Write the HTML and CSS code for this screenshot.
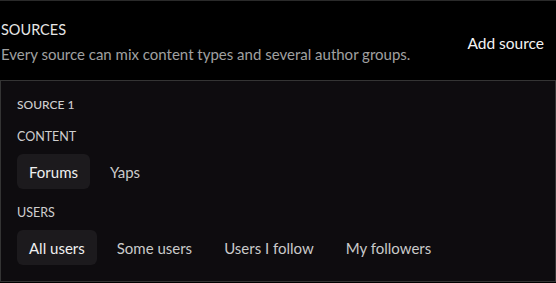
FILE: index.html
```html
<!DOCTYPE html>
<html lang="en">
<head>
  <meta charset="UTF-8">
  <title>Sources</title>
  <link rel="stylesheet" href="styles.css">
</head>
<body>

<div class="sources">
  <div class="sources-head">
    <div>
      <h2>SOURCES</h2>
      <p>Every source can mix content types and several author groups.</p>
    </div>
    <button class="add-btn">Add source</button>
  </div>

  <div class="source-card">
    <div class="card-title">SOURCE 1</div>

    <div class="group">
      <div class="group-label">CONTENT</div>
      <div class="pills">
        <button class="pill active">Forums</button>
        <button class="pill">Yaps</button>
      </div>
    </div>

    <div class="group">
      <div class="group-label">USERS</div>
      <div class="pills">
        <button class="pill active">All users</button>
        <button class="pill">Some users</button>
        <button class="pill">Users I follow</button>
        <button class="pill">My followers</button>
      </div>
    </div>
  </div>
</div>

</body>
</html>
```

FILE: styles.css
```css
body {
  margin: 0;
  background: #000;
  font-family: 'Lato', sans-serif;
  color: #ddd;
}
.sources {
  border-top: 1px solid #2a2a2a;
}
.sources-head {
  display: flex;
  align-items: center;
  justify-content: space-between;
  padding: 19px 12px 16px 1px;
}
.sources-head h2 {
  margin: 0;
  font-size: 14.5px;
  font-weight: 400;
  line-height: 20px;
  color: #e6e6e6;
}
.sources-head p {
  margin: 4px 0 0;
  font-size: 15px;
  line-height: 20px;
  color: #a0a0a0;
}
.add-btn {
  background: none;
  border: none;
  padding: 0;
  margin-top: 2px;
  font-family: inherit;
  font-size: 15.5px;
  font-weight: 400;
  color: #f4f4f4;
  cursor: pointer;
}
.source-card {
  background: #0e0c0f;
  border: 1px solid #343434;
  padding: 16px;
}
.card-title,
.group-label {
  font-size: 12px;
  line-height: 16px;
  font-weight: 500;
  color: #cfcfcf;
}
.group-label {
  font-weight: 400;
  font-size: 12.5px;
}
.group {
  margin-top: 16px;
}
.pills {
  display: flex;
  gap: 8px;
  margin-top: 9px;
}
.pill {
  height: 35px;
  padding: 0 12px;
  border: none;
  border-radius: 6px;
  background: none;
  font-family: inherit;
  font-size: 15px;
  font-weight: 400;
  color: #cacaca;
  cursor: pointer;
}
.pill.active {
  background: #1c1a1d;
  color: #f0f0f0;
}
```
